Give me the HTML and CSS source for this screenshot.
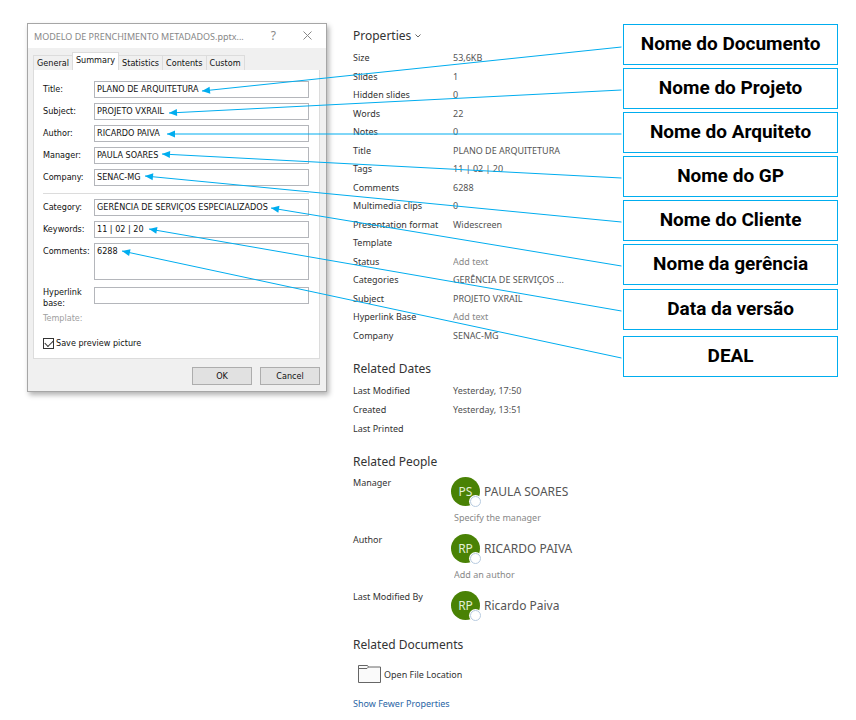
FILE: index.html
```html
<!DOCTYPE html>
<html lang="pt-BR">
<head>
<meta charset="utf-8">
<meta name="viewport" content="width=device-width, initial-scale=1">
<title>Metadados do documento</title>
<link rel="stylesheet" href="styles.css">
</head>
<body>
<main class="page">
  <form class="dialog" aria-label="Document properties">
    <header class="titlebar">
      <span class="titlebar-text">MODELO DE PRENCHIMENTO METADADOS.pptx...</span>
      <button type="button" class="titlebar-button" aria-label="Help">?</button>
      <button type="button" class="titlebar-button" aria-label="Close">
        <svg width="9" height="9" viewBox="0 0 9 9"><path d="M0.5 0.5 8.5 8.5M8.5 0.5 0.5 8.5" fill="none" stroke="#888" stroke-width="1"/></svg>
      </button>
    </header>
    <nav class="tabs">
      <button type="button" class="tab">General</button>
      <button type="button" class="tab tab-active">Summary</button>
      <button type="button" class="tab">Statistics</button>
      <button type="button" class="tab">Contents</button>
      <button type="button" class="tab">Custom</button>
    </nav>
    <section class="panel">
      <div class="fields">
        <label for="f-title">Title:</label><input id="f-title" value="PLANO DE ARQUITETURA">
        <label for="f-subject">Subject:</label><input id="f-subject" value="PROJETO VXRAIL">
        <label for="f-author">Author:</label><input id="f-author" value="RICARDO PAIVA">
        <label for="f-manager">Manager:</label><input id="f-manager" value="PAULA SOARES">
        <label for="f-company">Company:</label><input id="f-company" value="SENAC-MG">
      </div>
      <hr class="divider">
      <div class="fields">
        <label for="f-category">Category:</label><input id="f-category" value="GERÊNCIA DE SERVIÇOS ESPECIALIZADOS">
        <label for="f-keywords">Keywords:</label><input id="f-keywords" value="11 | 02 | 20">
        <label for="f-comments">Comments:</label><textarea id="f-comments">6288</textarea>
        <label for="f-base" class="label-wrap">Hyperlink base:</label><input id="f-base" value="">
      </div>
      <p class="template">Template:</p>
      <label class="preview">
        <input type="checkbox" checked>
        Save preview picture
      </label>
    </section>
    <footer class="actions">
      <button type="button" class="action">OK</button>
      <button type="button" class="action">Cancel</button>
    </footer>
  </form>

  <section class="info">
    <button type="button" class="info-menu">Properties
      <svg width="6" height="4" viewBox="0 0 6 4"><path d="M0.5 0.5 3 3 5.5 0.5" fill="none" stroke="#666" stroke-width="1"/></svg>
    </button>
    <table class="props">
      <tr><th>Size</th><td>53,6KB</td></tr>
      <tr><th>Slides</th><td>1</td></tr>
      <tr><th>Hidden slides</th><td>0</td></tr>
      <tr><th>Words</th><td>22</td></tr>
      <tr><th>Notes</th><td>0</td></tr>
      <tr><th>Title</th><td>PLANO DE ARQUITETURA</td></tr>
      <tr><th>Tags</th><td>11 | 02 | 20</td></tr>
      <tr><th>Comments</th><td>6288</td></tr>
      <tr><th>Multimedia clips</th><td>0</td></tr>
      <tr><th>Presentation format</th><td>Widescreen</td></tr>
      <tr><th>Template</th><td></td></tr>
      <tr><th>Status</th><td><input class="inline-input" aria-label="Status" placeholder="Add text"></td></tr>
      <tr><th>Categories</th><td>GERÊNCIA DE SERVIÇOS ...</td></tr>
      <tr><th>Subject</th><td>PROJETO VXRAIL</td></tr>
      <tr><th>Hyperlink Base</th><td><input class="inline-input" aria-label="Hyperlink Base" placeholder="Add text"></td></tr>
      <tr><th>Company</th><td>SENAC-MG</td></tr>
    </table>

    <h2 class="heading">Related Dates</h2>
    <table class="props dates">
      <tr><th>Last Modified</th><td>Yesterday, 17:50</td></tr>
      <tr><th>Created</th><td>Yesterday, 13:51</td></tr>
      <tr><th>Last Printed</th><td></td></tr>
    </table>

    <h2 class="heading">Related People</h2>
    <div class="people">
      <span class="role">Manager</span>
      <div class="person">
        <span class="avatar">PS<span class="presence"></span></span>
        <span class="name">PAULA SOARES</span>
        <input class="inline-input person-input" aria-label="Manager" placeholder="Specify the manager">
      </div>
      <span class="role">Author</span>
      <div class="person">
        <span class="avatar">RP<span class="presence"></span></span>
        <span class="name">RICARDO PAIVA</span>
        <input class="inline-input person-input" aria-label="Author" placeholder="Add an author">
      </div>
      <span class="role">Last Modified By</span>
      <div class="person">
        <span class="avatar">RP<span class="presence"></span></span>
        <span class="name">Ricardo Paiva</span>
      </div>
    </div>

    <h2 class="heading heading-documents">Related Documents</h2>
    <a class="location" href="#">
      <svg width="24" height="20" viewBox="0 0 24 20"><path d="M0.5 18.500V1.500H9.500L10.500 3H22.500V18.500Z" fill="#fafafa" stroke="#666"/><path d="M0.500 4.500H9L10.500 3" fill="none" stroke="#666"/></svg>
      Open File Location
    </a>
    <a class="fewer" href="#">Show Fewer Properties</a>
  </section>

  <aside class="callouts">
    <p class="callout">Nome do Documento</p>
    <p class="callout">Nome do Projeto</p>
    <p class="callout">Nome do Arquiteto</p>
    <p class="callout">Nome do GP</p>
    <p class="callout">Nome do Cliente</p>
    <p class="callout">Nome da gerência</p>
    <p class="callout callout-version">Data da versão</p>
    <p class="callout callout-deal">DEAL</p>
  </aside>

  <svg class="connectors" aria-hidden="true">
    <defs>
      <marker id="arrow" markerUnits="userSpaceOnUse" markerWidth="9" markerHeight="8" refX="0" refY="4" orient="auto">
        <path d="M0 4 8 0.500V7.500Z" fill="#00adef"/>
      </marker>
    </defs>
    <g class="connector-lines">
      <line x1="202" y1="91" x2="72.600%" y2="47"/>
      <line x1="169" y1="113" x2="72.600%" y2="90"/>
      <line x1="167" y1="134" x2="72.600%" y2="134"/>
      <line x1="162" y1="154" x2="72.600%" y2="178"/>
      <line x1="145" y1="176" x2="72.600%" y2="222"/>
      <line x1="271" y1="208" x2="72.600%" y2="266"/>
      <line x1="149" y1="229" x2="72.600%" y2="311"/>
      <line x1="122" y1="251" x2="72.600%" y2="358"/>
    </g>
  </svg>
</main>
</body>
</html>
```
FILE: styles.css
```css
* {
  box-sizing: border-box;
}

body {
  margin: 0;
  background: #fff;
  color: #333;
  font-family: "Noto Sans", "Open Sans", sans-serif;
  font-size: 9px;
}

button,
input,
textarea {
  margin: 0;
  padding: 0;
  border: 0;
  border-radius: 0;
  background: none;
  color: inherit;
  font: inherit;
}

.page {
  position: relative;
  display: grid;
  grid-template-columns: 300px 1fr 27.2vw;
  align-items: start;
  padding: 23px 0 8px 27px;
}

/* Dialog */

.dialog {
  border: 1px solid #a6a6a6;
  background: #f0f0f0;
  box-shadow: 2px 3px 5px rgba(0, 0, 0, 0.3);
  color: #111;
  font-family: "DejaVu Sans Condensed", "Noto Sans", sans-serif;
  font-size: 9px;
  line-height: 11px;
}

.titlebar {
  display: flex;
  align-items: center;
  height: 24px;
  padding: 0 14px 0 6px;
  background: #fff;
  color: #888;
  font-family: "Noto Sans", sans-serif;
}

.titlebar-text {
  flex: 1;
  white-space: nowrap;
}

.titlebar-button {
  width: 10px;
  margin-left: 26px;
  font-size: 12px;
  line-height: 10px;
}

.tabs {
  display: flex;
  align-items: flex-end;
  height: 22px;
  padding: 0 5px;
}

.tab {
  height: 15px;
  padding: 0 3px;
  border: 1px solid #dcdcdc;
  border-bottom: 0;
  margin-right: -1px;
}

.tab-active {
  height: 18px;
  padding-bottom: 3px;
  background: #fff;
}

.panel {
  margin: 0 6px 0 5px;
  padding: 11px 10px 9px 9px;
  border: 1px solid #dcdcdc;
  border-top: 0;
  background: #fff;
}

.fields {
  display: grid;
  grid-template-columns: 51px 1fr;
  row-gap: 5px;
}

.fields label {
  padding-top: 3px;
}

.fields input,
.fields textarea {
  width: 100%;
  height: 17px;
  padding: 0 2px 1px;
  border: 1px solid #b4b6bb;
  background: #fff;
}

.fields textarea {
  display: block;
  height: 37px;
  padding-top: 2px;
  margin-bottom: 2px;
  overflow: hidden;
  resize: none;
}

.fields .label-wrap {
  height: 22px;
  padding: 0;
  line-height: 11px;
}

.divider {
  height: 1px;
  margin: 7px 0 5px;
  border: 0;
  background: #dcdcdc;
}

.template {
  margin: 4px 0 0;
  color: #a0a0a0;
}

.preview {
  display: flex;
  align-items: center;
  gap: 2px;
  margin-top: 14px;
}

.preview input {
  appearance: none;
  display: grid;
  width: 11px;
  height: 11px;
  border: 1px solid #333;
}

.preview input:checked::before {
  content: "";
  width: 7px;
  height: 4px;
  margin: 1px;
  border: solid #333;
  border-width: 0 0 1px 1px;
  transform: rotate(-45deg);
}

.actions {
  display: flex;
  justify-content: flex-end;
  gap: 8px;
  padding: 8px 6px 6px;
}

.action {
  width: 60px;
  height: 18px;
  border: 1px solid #adadad;
  background: #e1e1e1;
}

/* Properties pane */

.info {
  display: flex;
  flex-direction: column;
  align-items: flex-start;
  padding: 4px 0 0 26px;
}

.info-menu,
.heading {
  margin: 0;
  font-size: 12px;
  font-weight: 400;
  line-height: 18px;
}

.info-menu {
  display: flex;
  align-items: center;
  gap: 4px;
  margin-bottom: 4px;
}

.props {
  width: 100%;
  border-collapse: collapse;
  table-layout: fixed;
  line-height: 12px;
}

.props tr {
  height: 18px;
}

.props tr:nth-child(even) {
  height: 19px;
}

.props th {
  width: 100px;
  padding: 0;
  font-weight: 400;
  text-align: left;
  white-space: nowrap;
}

.props td {
  padding: 0;
  color: #555;
}

.inline-input {
  display: block;
  width: 100%;
  height: 12px;
}

.inline-input::placeholder {
  color: #888;
  opacity: 1;
}

.heading {
  margin-top: 15px;
}

.heading-documents {
  margin-top: 16px;
}

.dates {
  margin-top: 3px;
}

.dates tr,
.dates tr:nth-child(even) {
  height: 19px;
}

.people {
  display: grid;
  grid-template-columns: 98px 1fr;
  row-gap: 11px;
  width: 100%;
  margin-top: 6px;
}

.role {
  line-height: 12px;
}

.person {
  display: grid;
  grid-template-columns: 29px 1fr;
  column-gap: 4px;
  row-gap: 5px;
  align-items: center;
}

.avatar {
  position: relative;
  width: 29px;
  height: 29px;
  border-radius: 50%;
  background: #498205;
  color: #e3efd5;
  font-size: 12px;
  line-height: 29px;
  text-align: center;
}

.presence {
  position: absolute;
  right: -1px;
  bottom: -1px;
  width: 11px;
  height: 11px;
  border: 1px solid #b7cbe0;
  border-radius: 50%;
  background: #fff;
  box-shadow: 0 0 0 1px #fff;
}

.name {
  color: #555;
  font-size: 12px;
}

.person-input {
  grid-column: 1 / -1;
  padding-left: 3px;
}

.location {
  display: flex;
  align-items: center;
  gap: 2px;
  margin: 10px 0 0 5px;
  color: #333;
  text-decoration: none;
}

.fewer {
  margin-top: 14px;
  color: #2a66a5;
  line-height: 12px;
  text-decoration: none;
}

/* Callouts */

.callouts {
  display: grid;
  gap: 3px;
  padding: 1px 18px 0 0;
}

.callout {
  height: 41px;
  margin: 0;
  border: 1px solid #00adef;
  color: #000;
  font-family: Roboto, sans-serif;
  font-size: 19px;
  font-weight: 700;
  line-height: 38px;
  text-align: center;
}

.callout-version {
  margin-top: 1px;
}

.callout-deal {
  margin-top: 3px;
}

.connectors {
  position: absolute;
  top: 0;
  left: 0;
  width: 100%;
  height: 100%;
  pointer-events: none;
}

.connector-lines line {
  stroke: #00adef;
  stroke-width: 1px;
  marker-start: url(#arrow);
}
```
